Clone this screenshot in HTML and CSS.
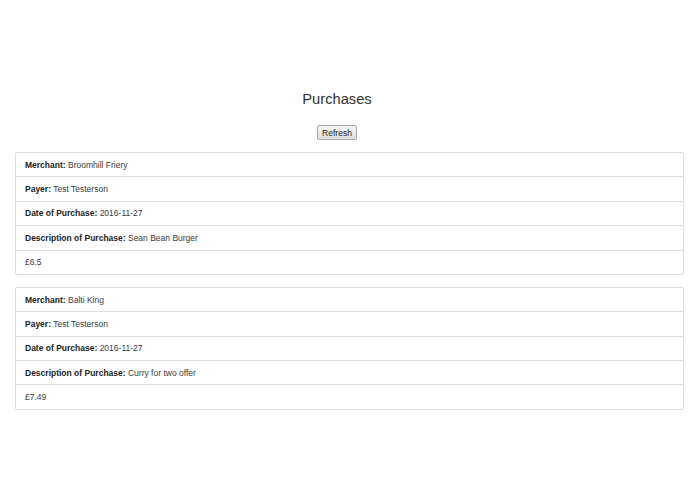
FILE: index.html
```html
<!DOCTYPE html>
<head>
    <meta charset="UTF-8">
    <title>Purchases</title>
    <link rel="stylesheet" href="styles.css">
</head>
<body>
    <div class="container">
        <div class="header">
            <h2 class="title">Purchases</h2>
            <div class="actions">
                <button class="refresh">Refresh</button>
            </div>
        </div>

        <ul class="list-group">
            <li class="list-group-item"><b>Merchant:</b> Broomhill Friery</li>
            <li class="list-group-item"><b>Payer:</b> Test Testerson</li>
            <li class="list-group-item"><b>Date of Purchase:</b> 2016-11-27</li>
            <li class="list-group-item"><b>Description of Purchase:</b> Sean Bean Burger</li>
            <li class="list-group-item">£6.5</li>
        </ul>

        <ul class="list-group">
            <li class="list-group-item"><b>Merchant:</b> Balti King</li>
            <li class="list-group-item"><b>Payer:</b> Test Testerson</li>
            <li class="list-group-item"><b>Date of Purchase:</b> 2016-11-27</li>
            <li class="list-group-item"><b>Description of Purchase:</b> Curry for two offer</li>
            <li class="list-group-item">£7.49</li>
        </ul>
    </div>
</body>
</html>
```

FILE: styles.css
```css
body {
    font-family: "Liberation Sans", Arial, sans-serif;
    font-size: 8.5px;
    color: #3a3a3a;
    margin: 0;
    background: #fff;
}
.container {
    padding: 0 11px 0 15px;
}
.header {
    padding-right: 25px;
}
.title {
    font-size: 14.7px;
    font-weight: normal;
    line-height: 18px;
    text-align: center;
    margin: 90px 0 17px;
    color: #333;
}
.actions {
    text-align: center;
    margin-bottom: 12px;
}
.refresh {
    font-family: "Liberation Sans", Arial, sans-serif;
    font-size: 8.5px;
    color: #222;
    height: 15px;
    padding: 0 4px;
    border: 1px solid #a9a9a9;
    border-radius: 2px;
    background: linear-gradient(#f6f6f6, #dedede);
}
.list-group {
    list-style: none;
    padding: 0;
    margin: 0 0 12px;
}
.list-group-item {
    border: 1px solid #ddd;
    margin-bottom: -1px;
    padding: 5.7px 9px;
    line-height: 12px;
}
.list-group-item b {
    color: #222;
}
.list-group-item:first-child {
    border-radius: 2px 2px 0 0;
}
.list-group-item:last-child {
    margin-bottom: 0;
    border-radius: 0 0 2px 2px;
}
```
